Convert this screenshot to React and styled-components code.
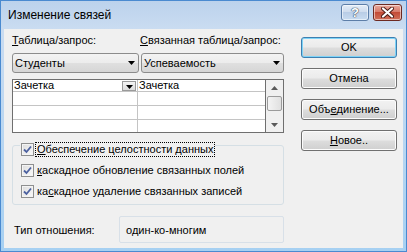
import React from 'react';
import styled, { createGlobalStyle } from 'styled-components';

const Global = createGlobalStyle`
  html, body { margin: 0; padding: 0; }
  body {
    width: 407px; height: 252px; overflow: hidden;
    font-family: "Liberation Sans", Arial, sans-serif;
    font-size: 11px; color: #000;
  }
  * { box-sizing: border-box; }
`;

const Window = styled.div`
  width: 407px; height: 252px;
  display: flex; flex-direction: column;
  background: linear-gradient(#bcd2ec, #cadcf1 28px, #a6d0f2);
  border: 1px solid #4a8ad0;
  padding: 0 3px 3px 3px;
`;

const TitleBar = styled.div`
  height: 28px; flex: none;
  display: flex; align-items: flex-start; justify-content: space-between;
  padding: 3px 1px 0 4px;
`;

const TitleText = styled.div`
  font-size: 12px; line-height: 14px; margin-top: 4px; color: #000;
`;

const TitleButtons = styled.div`
  display: flex; gap: 4px;
`;

const CaptionBtn = styled.div`
  width: ${p => p.$w}px; height: 17px;
  border: 1px solid ${p => (p.$close ? '#6d2a22' : '#5d7ea8')};
  border-radius: 3px;
  display: flex; align-items: center; justify-content: center;
  background: ${p =>
    p.$close
      ? 'linear-gradient(#e9a99c 0%, #d77b6b 45%, #c34b37 50%, #d0705a 100%)'
      : 'linear-gradient(#e4edf8 0%, #cfdcee 45%, #b9cde6 50%, #c9dcf1 100%)'};
  box-shadow: inset 0 0 0 1px rgba(255,255,255,0.55);
`;

const HelpGlyph = styled.span`
  font-family: "Liberation Sans", Arial, sans-serif;
  font-weight: bold; font-size: 13px; line-height: 13px;
  color: #fff;
  text-shadow: 0 0 1px #3c4c63, 0 0 1px #3c4c63, 0 0 1px #3c4c63;
`;

const Client = styled.div`
  flex: 1;
  background: #f0f0f0;
  display: flex;
  padding: 5px 0 0 8px;
`;

const LeftPane = styled.div`
  width: 272px;
  display: flex; flex-direction: column;
`;

const Labels = styled.div`
  display: grid; grid-template-columns: 128px 1fr;
  line-height: 13px; height: 13px;
`;

const Label = styled.span`
  padding-left: ${p => p.$pl || 0}px;
  white-space: nowrap;
`;

const U = styled.span`text-decoration: underline; text-underline-offset: 1px;`;

const ComboRow = styled.div`
  display: flex; gap: 2px; margin-top: 6px;
`;

const Combo = styled.div`
  width: ${p => p.$w}px; height: 20px;
  border: 1px solid #8c8c8c; border-radius: 3px;
  background: linear-gradient(#f3f3f3 0%, #ececec 48%, #dfdfdf 52%, #d6d6d6 100%);
  display: flex; align-items: center; justify-content: space-between;
  padding: 0 3px 0 2px;
  line-height: 13px;
`;

const Arrow = () => (
  <svg width="7" height="4" viewBox="0 0 7 4"><path d="M0 0h7L3.5 4z" fill="#000" /></svg>
);

const Grid = styled.div`
  margin-top: 6px; height: 54px;
  border: 1px solid #6f6f6f;
  display: flex; background: #fff;
`;

const Table = styled.div`
  flex: 1; display: flex; flex-direction: column;
`;

const Row = styled.div`
  height: ${p => p.$h}px; flex: none;
  display: grid; grid-template-columns: 125px 1fr;
  border-bottom: ${p => (p.$last ? 'none' : '1px solid #c4c4c4')};
`;

const Cell = styled.div`
  border-right: ${p => (p.$div ? '1px solid #c4c4c4' : 'none')};
  display: flex; align-items: center; justify-content: space-between;
  padding: 0 0 0 1px; line-height: 11px;
`;

const CellDrop = styled.div`
  width: 14px; height: 10px; margin-right: 1px;
  border: 1px solid #9a9a9a;
  background: linear-gradient(#f4f4f4, #dcdcdc);
  display: flex; align-items: flex-end; justify-content: center;
  padding-bottom: 1px;
`;

const Scroll = styled.div`
  width: 18px; flex: none;
  border-left: 1px solid #6f6f6f;
  background: #f0f0f0;
  display: flex; flex-direction: column; align-items: center; justify-content: space-between;
  padding: 6px 0 5px;
`;

const Thumb = styled.div`
  width: 15px; height: 15px;
  border: 1px solid #9b9b9b; border-radius: 2px;
  background: linear-gradient(90deg, #f4f4f4, #e0e0e0);
  margin-top: -6px;
`;

const SmallTri = ({ down }) => (
  <svg width="7" height="4" viewBox="0 0 7 4">
    <path d={down ? 'M0 0h7L3.5 4z' : 'M0 4h7L3.5 0z'} fill="#5a5a5a" />
  </svg>
);

const Group = styled.div`
  margin-top: 12px; height: 60px;
  border: 1px solid #d5dfe5; border-radius: 3px;
  display: flex; flex-direction: column; gap: 8px;
  padding: 0 0 0 7px;
`;

const CheckRow = styled.div`
  display: flex; align-items: center; height: 13px;
  margin-top: ${p => (p.$legend ? -3 : 0)}px;
  align-self: flex-start;
  background: #f0f0f0;
  padding: 0 1px;
  line-height: 13px;
`;

const Box = styled.span`
  width: 13px; height: 13px; flex: none;
  border: 1px solid #8e8f8f;
  background: linear-gradient(135deg, #dcdcdc, #fbfbfb);
  box-shadow: inset 0 0 0 1px #f4f4f4;
  display: flex; align-items: center; justify-content: center;
  margin-right: 2px;
`;

const CheckText = styled.span`
  padding: 0 1px;
  outline: ${p => (p.$focus ? '1px dotted #000' : 'none')};
  outline-offset: 0;
  white-space: nowrap;
`;

const Tick = () => (
  <svg width="9" height="9" viewBox="0 0 9 9">
    <path d="M1 4.5L3.5 7L8 1.5" fill="none" stroke="#4c61a0" strokeWidth="1.8" />
  </svg>
);

const TypeRow = styled.div`
  margin-top: 11px;
  display: flex; align-items: center;
`;

const TypeLabel = styled.span`
  width: 107px; padding-left: 2px;
`;

const TypeValue = styled.div`
  width: 165px; height: 27px;
  border: 1px solid #d8e0e8; border-radius: 2px;
  display: flex; align-items: center;
  padding-left: 6px;
`;

const ButtonCol = styled.div`
  margin-left: 17px; padding-top: 3px;
  display: flex; flex-direction: column; gap: 10px;
`;

const Button = styled.div`
  width: 96px; height: 21px;
  border: 1px solid ${p => (p.$default ? '#3c7fb1' : '#707070')};
  border-radius: 3px;
  background: linear-gradient(#f2f2f2 0%, #ebebeb 48%, #dddddd 52%, #cfcfcf 100%);
  box-shadow: ${p => (p.$default ? 'inset 0 0 0 1px #7ed3f7' : 'inset 0 0 0 1px #fcfcfc')};
  display: flex; align-items: center; justify-content: center;
  line-height: 13px;
`;

export default function App() {
  return (
    <>
      <Global />
      <Window>
        <TitleBar>
          <TitleText>Изменение связей</TitleText>
          <TitleButtons>
            <CaptionBtn $w={28}><HelpGlyph>?</HelpGlyph></CaptionBtn>
            <CaptionBtn $w={29} $close>
              <svg width="13" height="11" viewBox="0 0 13 11">
                <path d="M2 1.5L11 9.5M11 1.5L2 9.5" stroke="#4a1a14" strokeWidth="4" strokeLinecap="round" />
                <path d="M2 1.5L11 9.5M11 1.5L2 9.5" stroke="#fff" strokeWidth="2.2" strokeLinecap="round" />
              </svg>
            </CaptionBtn>
          </TitleButtons>
        </TitleBar>
        <Client>
          <LeftPane>
            <Labels>
              <Label><U>Т</U>аблица/запрос:</Label>
              <Label><U>С</U>вязанная таблица/запрос:</Label>
            </Labels>
            <ComboRow>
              <Combo $w={127}><span>Студенты</span><Arrow /></Combo>
              <Combo $w={143}><span>Успеваемость</span><Arrow /></Combo>
            </ComboRow>
            <Grid>
              <Table>
                <Row $h={12}>
                  <Cell $div><span>Зачетка</span><CellDrop><Arrow /></CellDrop></Cell>
                  <Cell><span>Зачетка</span></Cell>
                </Row>
                <Row $h={14}><Cell $div /><Cell /></Row>
                <Row $h={14}><Cell $div /><Cell /></Row>
                <Row $h={12} $last><Cell $div /><Cell /></Row>
              </Table>
              <Scroll>
                <SmallTri />
                <Thumb />
                <SmallTri down />
              </Scroll>
            </Grid>
            <Group>
              <CheckRow $legend>
                <Box><Tick /></Box>
                <CheckText $focus><U>О</U>беспечение целостности данных</CheckText>
              </CheckRow>
              <CheckRow>
                <Box><Tick /></Box>
                <CheckText><U>к</U>аскадное обновление связанных полей</CheckText>
              </CheckRow>
              <CheckRow>
                <Box><Tick /></Box>
                <CheckText>ка<U>с</U>кадное удаление связанных записей</CheckText>
              </CheckRow>
            </Group>
            <TypeRow>
              <TypeLabel>Тип отношения:</TypeLabel>
              <TypeValue>один-ко-многим</TypeValue>
            </TypeRow>
          </LeftPane>
          <ButtonCol>
            <Button $default>OK</Button>
            <Button>Отмена</Button>
            <Button>Объ<U>е</U>динение...</Button>
            <Button><U>Н</U>овое..</Button>
          </ButtonCol>
        </Client>
      </Window>
    </>
  );
}
